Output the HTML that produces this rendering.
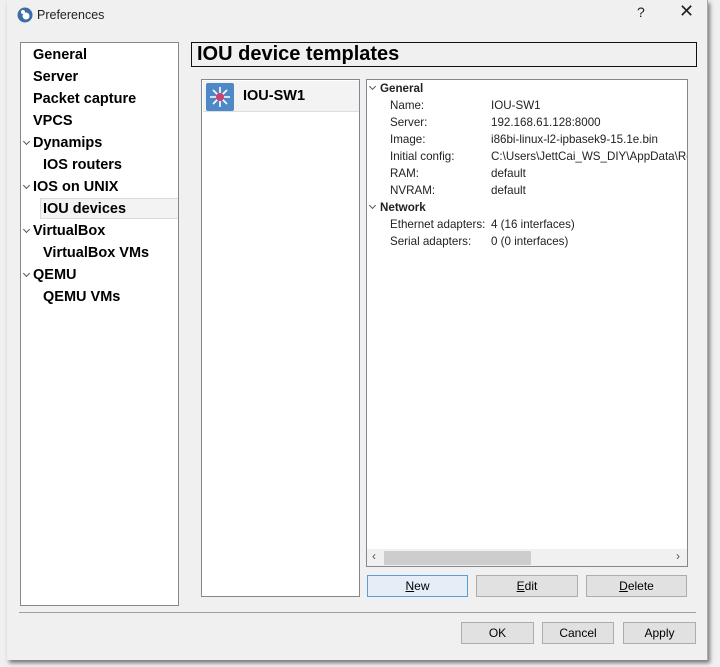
<!DOCTYPE html>
<html><head><meta charset="utf-8"><style>
*{box-sizing:border-box;margin:0;padding:0}
body{width:720px;height:667px;background:#6d6d6d;position:relative;overflow:hidden;font-family:"Liberation Sans",sans-serif}
.bgapp{position:absolute;left:0;top:0;width:720px;height:667px;background:#f0f0f0}
.dlg{position:absolute;left:7px;top:0;width:701px;height:660px;background:#f0f0f0;border-right:1px solid #aaa;box-shadow:2px 3px 4px rgba(0,0,0,.5)}
.title{position:absolute;left:0;top:0;width:100%;height:31px;background:#f0f0f0}
.abs{position:absolute}
.tree{left:13px;top:42px;width:159px;height:564px;background:#fff;border:1px solid #828790;overflow:hidden}
.ti{position:absolute;font-weight:bold;font-size:14.5px;color:#000;white-space:nowrap}
.arr{position:absolute;width:5px;height:5px;border-right:1px solid #555;border-bottom:1px solid #555;transform:rotate(45deg)}
.box{border:1px solid #828790;background:#fff}
.prop{position:absolute;font-size:11.6px;color:#222;white-space:nowrap}
.btn{position:absolute;height:22px;background:#e1e1e1;border:1px solid #adadad;font-size:12px;text-align:center;line-height:20px;color:#000}
</style></head><body>
<div class="bgapp"></div>
<div class="dlg">
 <div class="title">
  <svg class="abs" style="left:10px;top:7px" width="16" height="16" viewBox="0 0 16 16"><circle cx="8" cy="8" r="7.5" fill="#3a6ea5"/><circle cx="9" cy="9" r="3.5" fill="#fff"/><circle cx="6" cy="5" r="2" fill="#fff"/></svg>
  <div class="abs" style="left:30px;top:8px;font-size:12.5px;color:#222">Preferences</div>
  <div class="abs" style="left:630px;top:4px;font-size:14px;color:#222">?</div>
  <div class="abs" style="left:672px;top:1px;font-size:18px;color:#222">✕</div>
 </div>
 <div class="abs tree">
  <div class="ti" style="left:12px;top:4px">General</div>
  <div class="ti" style="left:12px;top:26px">Server</div>
  <div class="ti" style="left:12px;top:48px">Packet capture</div>
  <div class="ti" style="left:12px;top:70px">VPCS</div>
  <div class="arr" style="left:3px;top:96px"></div>
  <div class="ti" style="left:12px;top:92px">Dynamips</div>
  <div class="ti" style="left:22px;top:114px">IOS routers</div>
  <div class="arr" style="left:3px;top:140px"></div>
  <div class="ti" style="left:12px;top:136px">IOS on UNIX</div>
  <div class="abs" style="left:19px;top:155px;width:145px;height:21px;background:#f3f3f3;border:1px solid #dadada"></div>
  <div class="ti" style="left:22px;top:158px">IOU devices</div>
  <div class="arr" style="left:3px;top:184px"></div>
  <div class="ti" style="left:12px;top:180px">VirtualBox</div>
  <div class="ti" style="left:22px;top:202px">VirtualBox VMs</div>
  <div class="arr" style="left:3px;top:228px"></div>
  <div class="ti" style="left:12px;top:224px">QEMU</div>
  <div class="ti" style="left:22px;top:246px">QEMU VMs</div>
 </div>
 <div class="abs" style="left:184px;top:42px;width:506px;height:25px;border:1.5px solid #111;background:#f0f0f0;font-weight:bold;font-size:20px;padding-left:5px;line-height:22px">IOU device templates</div>
 <div class="abs box" style="left:194px;top:79px;width:159px;height:518px">
  <div class="abs" style="left:1px;top:1px;width:156px;height:31px;background:#f3f3f3;border-bottom:1px solid #ddd"></div>
  <svg class="abs" style="left:4px;top:3px" width="28" height="28" viewBox="0 0 28 28"><rect x="0" y="0" width="28" height="28" rx="2" fill="#4f88c6"/><g stroke="#fff" stroke-width="1.6"><line x1="14" y1="4" x2="14" y2="24"/><line x1="4" y1="14" x2="24" y2="14"/><line x1="7" y1="7" x2="21" y2="21"/><line x1="21" y1="7" x2="7" y2="21"/></g><circle cx="14" cy="14" r="4" fill="#d0406a"/></svg>
  <div class="abs" style="left:41px;top:8px;font-weight:bold;font-size:14.5px">IOU-SW1</div>
 </div>
 <div class="abs box" style="left:359px;top:79px;width:322px;height:488px;overflow:hidden">
  <div class="arr" style="left:3px;top:4px"></div>
  <div class="prop" style="left:13px;top:2px;font-weight:bold">General</div>
  <div class="prop" style="left:23px;top:19px">Name:</div><div class="prop" style="left:124px;top:19px">IOU-SW1</div>
  <div class="prop" style="left:23px;top:36px">Server:</div><div class="prop" style="left:124px;top:36px">192.168.61.128:8000</div>
  <div class="prop" style="left:23px;top:53px">Image:</div><div class="prop" style="left:124px;top:53px">i86bi-linux-l2-ipbasek9-15.1e.bin</div>
  <div class="prop" style="left:23px;top:70px">Initial config:</div><div class="prop" style="left:124px;top:70px">C:\Users\JettCai_WS_DIY\AppData\Ro</div>
  <div class="prop" style="left:23px;top:87px">RAM:</div><div class="prop" style="left:124px;top:87px">default</div>
  <div class="prop" style="left:23px;top:104px">NVRAM:</div><div class="prop" style="left:124px;top:104px">default</div>
  <div class="arr" style="left:3px;top:123px"></div>
  <div class="prop" style="left:13px;top:121px;font-weight:bold">Network</div>
  <div class="prop" style="left:23px;top:138px">Ethernet adapters:</div><div class="prop" style="left:124px;top:138px">4 (16 interfaces)</div>
  <div class="prop" style="left:23px;top:155px">Serial adapters:</div><div class="prop" style="left:124px;top:155px">0 (0 interfaces)</div>
  <div class="abs" style="left:0;top:469px;width:320px;height:17px;background:#f0f0f0"></div>
  <div class="abs" style="left:17px;top:471px;width:147px;height:14px;background:#cdcdcd"></div>
  <div class="abs" style="left:5px;top:469px;font-size:12px;color:#555">‹</div>
  <div class="abs" style="left:309px;top:469px;font-size:12px;color:#555">›</div>
 </div>
 <div class="btn" style="left:360px;top:575px;width:101px;border-color:#5aa0d8;background:#e5eef7"><u>N</u>ew</div>
 <div class="btn" style="left:469px;top:575px;width:102px"><u>E</u>dit</div>
 <div class="btn" style="left:579px;top:575px;width:101px"><u>D</u>elete</div>
 <div class="abs" style="left:12px;top:612px;width:677px;height:1px;background:#a0a0a0"></div>
 <div class="btn" style="left:454px;top:622px;width:73px">OK</div>
 <div class="btn" style="left:535px;top:622px;width:72px">Cancel</div>
 <div class="btn" style="left:616px;top:622px;width:73px">Apply</div>
</div>
</body></html>
